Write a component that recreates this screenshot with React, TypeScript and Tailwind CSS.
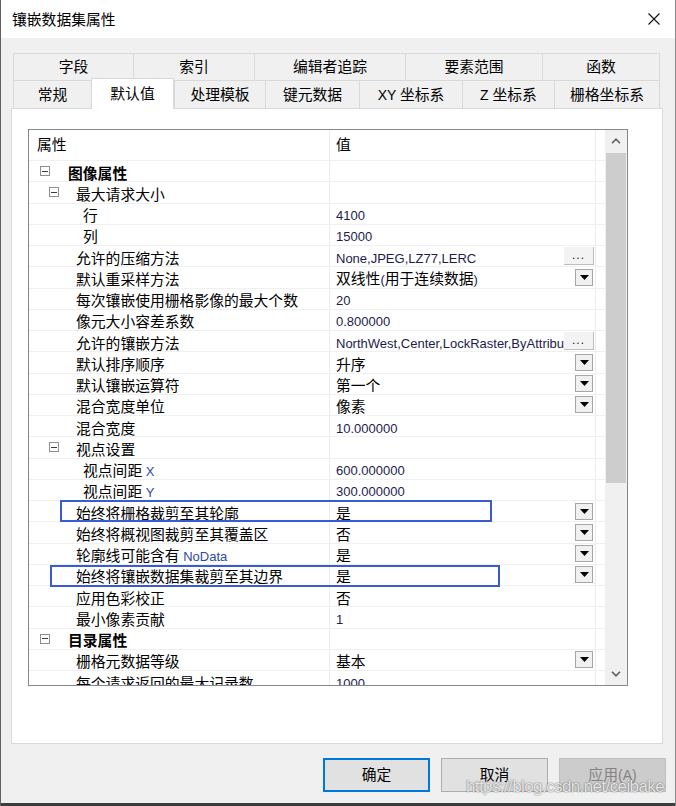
import clsx from 'clsx'

type Row = {
  label: string
  level: 0 | 1 | 2
  value?: string
  box?: boolean
  bold?: boolean
  ctl?: 'drop' | 'dots'
}

const rows: Row[] = [
  { label: '图像属性', level: 0, box: true, bold: true },
  { label: '最大请求大小', level: 1, box: true },
  { label: '行', level: 2, value: '4100' },
  { label: '列', level: 2, value: '15000' },
  { label: '允许的压缩方法', level: 1, value: 'None,JPEG,LZ77,LERC', ctl: 'dots' },
  { label: '默认重采样方法', level: 1, value: '双线性(用于连续数据)', ctl: 'drop' },
  { label: '每次镶嵌使用栅格影像的最大个数', level: 1, value: '20' },
  { label: '像元大小容差系数', level: 1, value: '0.800000' },
  {
    label: '允许的镶嵌方法',
    level: 1,
    value: 'NorthWest,Center,LockRaster,ByAttribute,Nadir,Viewpoint,Seamline',
    ctl: 'dots',
  },
  { label: '默认排序顺序', level: 1, value: '升序', ctl: 'drop' },
  { label: '默认镶嵌运算符', level: 1, value: '第一个', ctl: 'drop' },
  { label: '混合宽度单位', level: 1, value: '像素', ctl: 'drop' },
  { label: '混合宽度', level: 1, value: '10.000000' },
  { label: '视点设置', level: 1, box: true },
  { label: '视点间距 X', level: 2, value: '600.000000' },
  { label: '视点间距 Y', level: 2, value: '300.000000' },
  { label: '始终将栅格裁剪至其轮廓', level: 1, value: '是', ctl: 'drop' },
  { label: '始终将概视图裁剪至其覆盖区', level: 1, value: '否', ctl: 'drop' },
  { label: '轮廓线可能含有 NoData', level: 1, value: '是', ctl: 'drop' },
  { label: '始终将镶嵌数据集裁剪至其边界', level: 1, value: '是', ctl: 'drop' },
  { label: '应用色彩校正', level: 1, value: '否' },
  { label: '最小像素贡献', level: 1, value: '1' },
  { label: '目录属性', level: 0, box: true, bold: true },
  { label: '栅格元数据等级', level: 1, value: '基本', ctl: 'drop' },
  { label: '每个请求返回的最大记录数', level: 1, value: '1000' },
]

const backTabs = [
  { name: '字段', w: 'w-[120px]' },
  { name: '索引', w: 'w-[121px]' },
  { name: '编辑者追踪', w: 'w-[151px]' },
  { name: '要素范围', w: 'w-[137px]' },
  { name: '函数', w: 'w-[118px]' },
]

const frontTabs = [
  { name: '常规', w: 'w-[78px]' },
  { name: '默认值', w: 'w-[83px]', active: true },
  { name: '处理模板', w: 'w-[91px]' },
  { name: '键元数据', w: 'w-[94px]' },
  { name: 'XY 坐标系', w: 'w-[103px]' },
  { name: 'Z 坐标系', w: 'w-[92px]' },
  { name: '栅格坐标系', w: 'w-[106px]' },
]

// CJK runs get the CJK face at a larger size, the rest keeps the Arial-width face
function Txt({ text, latin = 'text-[#1c1c4e]' }: { text: string; latin?: string }) {
  const parts = text.split(/([\u3400-\u9fff]+)/).filter(Boolean)
  return (
    <span className="whitespace-pre">
      {parts.map((p, i) =>
        /[\u3400-\u9fff]/.test(p) ? (
          <span key={i} className="font-['Noto_Sans_CJK_SC',sans-serif] text-[14.8px]">
            {p}
          </span>
        ) : (
          <span key={i} className={clsx("font-['Liberation_Sans',sans-serif] text-[13px]", latin)}>
            {p}
          </span>
        ),
      )}
    </span>
  )
}

function Expander({ className }: { className: string }) {
  return (
    <span
      className={clsx(
        'flex h-[10px] w-[10px] shrink-0 items-center justify-center border border-[#8e8e8e] bg-white',
        className,
      )}
    >
      <span className="h-px w-[6px] bg-[#3c3c3c]" />
    </span>
  )
}

function DropButton() {
  return (
    <div className="mr-[2px] flex h-[17px] w-[18px] shrink-0 items-center justify-center border border-[#a6a6a6] bg-[#f0f0f0]">
      <svg width="9" height="5" viewBox="0 0 9 5">
        <path d="M0 0h9L4.5 5z" fill="#000" />
      </svg>
    </div>
  )
}

function DotsButton() {
  return (
    <div className="mr-[1px] flex h-[18px] w-[30px] shrink-0 items-end justify-center border-b border-r border-[#bdbdbd] bg-[#f3f3f3] pb-[3px] font-['Liberation_Sans',sans-serif] text-[12px] leading-none tracking-[1px] text-[#222]">
      ...
    </div>
  )
}

function GridRow({ row }: { row: Row }) {
  return (
    <div className="flex h-[21.25px] shrink-0 border-b border-[#f0f0f0]">
      <div
        className={clsx(
          'flex w-[301px] shrink-0 items-center whitespace-nowrap border-r border-[#ececec] leading-[18px]',
          row.bold && 'font-bold',
        )}
      >
        {row.box ? (
          <>
            <Expander className={row.level === 0 ? 'ml-[11px]' : 'ml-[20px]'} />
            <span className={clsx('translate-y-[1.5px]', row.level === 0 ? 'ml-[18px]' : 'ml-[17px]')}>
              <Txt text={row.label} latin="text-[#2a4aa6]" />
            </span>
          </>
        ) : (
          <span className={clsx('translate-y-[1.5px]', row.level === 2 ? 'pl-[54px]' : 'pl-[47px]')}>
            <Txt text={row.label} latin="text-[#2a4aa6]" />
          </span>
        )}
      </div>
      <div className="flex w-[266px] shrink-0 items-center border-r border-[#ececec] pl-[6px]">
        <span className="min-w-0 flex-1 translate-y-[1.5px] overflow-hidden whitespace-nowrap leading-[18px]">
          {row.value && <Txt text={row.value} />}
        </span>
        {row.ctl === 'drop' && <DropButton />}
        {row.ctl === 'dots' && <DotsButton />}
      </div>
    </div>
  )
}

export default function App() {
  return (
    <div className="relative flex h-[806px] w-[676px] flex-col overflow-hidden border-l border-r border-l-[#5f5f5f] border-r-[#8a8a8a] bg-[#f0f0f0] font-['Liberation_Sans','Noto_Sans_CJK_SC',sans-serif] text-black">
      <div className="flex h-[38px] shrink-0 items-center justify-between bg-white pl-[11px] pr-[15px]">
        <span className="font-['Noto_Sans_CJK_SC',sans-serif] text-[14.8px] leading-none">镶嵌数据集属性</span>
        <svg width="12" height="12" viewBox="0 0 12 12">
          <path d="M0.5 0.5L11.5 11.5M11.5 0.5L0.5 11.5" stroke="#111" strokeWidth="1.1" />
        </svg>
      </div>

      <div className="ml-[12px] mt-[15px] w-[647px] shrink-0">
        <div className="flex h-[27px]">
          {backTabs.map((t, i) => (
            <div
              key={t.name}
              className={clsx(
                'flex h-full items-center justify-center border-l border-t border-[#d9d9d9] bg-[#f0f0f0] leading-none',
                t.w,
                i === backTabs.length - 1 && 'border-r',
              )}
            >
              <Txt text={t.name} latin="text-black" />
            </div>
          ))}
        </div>
        <div className="-mt-[2px] flex h-[30px] items-end">
          {frontTabs.map((t, i) => (
            <div
              key={t.name}
              className={clsx(
                'flex items-center justify-center border-l border-t border-[#d9d9d9] leading-none',
                t.w,
                t.active ? 'relative z-10 -mb-px h-[31px] border-r bg-white' : 'h-[28px] bg-[#f0f0f0]',
                i === frontTabs.length - 1 && 'border-r',
              )}
            >
              <Txt text={t.name} latin="text-black text-[14px]" />
            </div>
          ))}
        </div>
      </div>

      <div className="ml-[10px] h-[636px] w-[652px] shrink-0 border border-[#d9d9d9] bg-white pl-[16px] pt-[20px]">
        <div className="flex h-[557px] w-[600px] border border-[#828790] bg-white">
          <div className="flex min-w-0 flex-1 flex-col">
            <div className="flex h-[31px] shrink-0 border-b border-[#f0f0f0] leading-none">
              <div className="flex w-[301px] shrink-0 items-center border-r border-[#ececec] pl-[8px]">
                <Txt text="属性" />
              </div>
              <div className="flex w-[266px] shrink-0 items-center border-r border-[#ececec] pl-[6px]">
                <Txt text="值" />
              </div>
            </div>
            <div className="flex flex-1 flex-col overflow-hidden">
              {rows.map((r) => (
                <GridRow key={r.label} row={r} />
              ))}
            </div>
          </div>
          <div className="flex w-[22px] shrink-0 flex-col bg-[#f0f0f0]">
            <div className="flex h-[22px] items-center justify-center">
              <svg width="10" height="6" viewBox="0 0 10 6">
                <path d="M1 5.2L5 1.2L9 5.2" fill="none" stroke="#606060" strokeWidth="1.6" />
              </svg>
            </div>
            <div className="mx-px mt-px h-[330px] bg-[#cdcdcd]" />
            <div className="flex-1" />
            <div className="flex h-[22px] items-center justify-center">
              <svg width="10" height="6" viewBox="0 0 10 6">
                <path d="M1 0.8L5 4.8L9 0.8" fill="none" stroke="#606060" strokeWidth="1.6" />
              </svg>
            </div>
          </div>
        </div>
      </div>

      <div className="mt-[14px] flex shrink-0 justify-end gap-[11px] pr-[9px]">
        <button className="flex h-[34px] w-[107px] items-center justify-center border-2 border-[#0078d7] bg-[#e1e1e1] leading-none">
          <Txt text="确定" />
        </button>
        <button className="flex h-[34px] w-[107px] items-center justify-center border border-[#adadad] bg-[#e1e1e1] leading-none">
          <Txt text="取消" />
        </button>
        <button className="flex h-[34px] w-[107px] items-center justify-center border border-[#bfbfbf] bg-[#cccccc] leading-none text-[#838383]">
          <Txt text="应用(A)" latin="text-[#838383] text-[14px]" />
        </button>
      </div>

      <div className="mt-auto h-[3px] shrink-0 bg-[#3c3c3c]" />

      <div className="pointer-events-none absolute left-[59px] top-[500px] h-[22px] w-[432px] border-2 border-[#3a5bd6]" />
      <div className="pointer-events-none absolute left-[49px] top-[565px] h-[22px] w-[450px] border-2 border-[#3a5bd6]" />

      <div className="pointer-events-none absolute left-[465px] top-[777px] font-['Liberation_Sans',sans-serif] text-[17px] leading-[20px] tracking-[-0.6px] text-white/85 [text-shadow:0_0_1px_rgba(0,0,0,0.55),0_0_2px_rgba(0,0,0,0.3)]">
        https://blog.csdn.net/ceibake
      </div>
    </div>
  )
}
